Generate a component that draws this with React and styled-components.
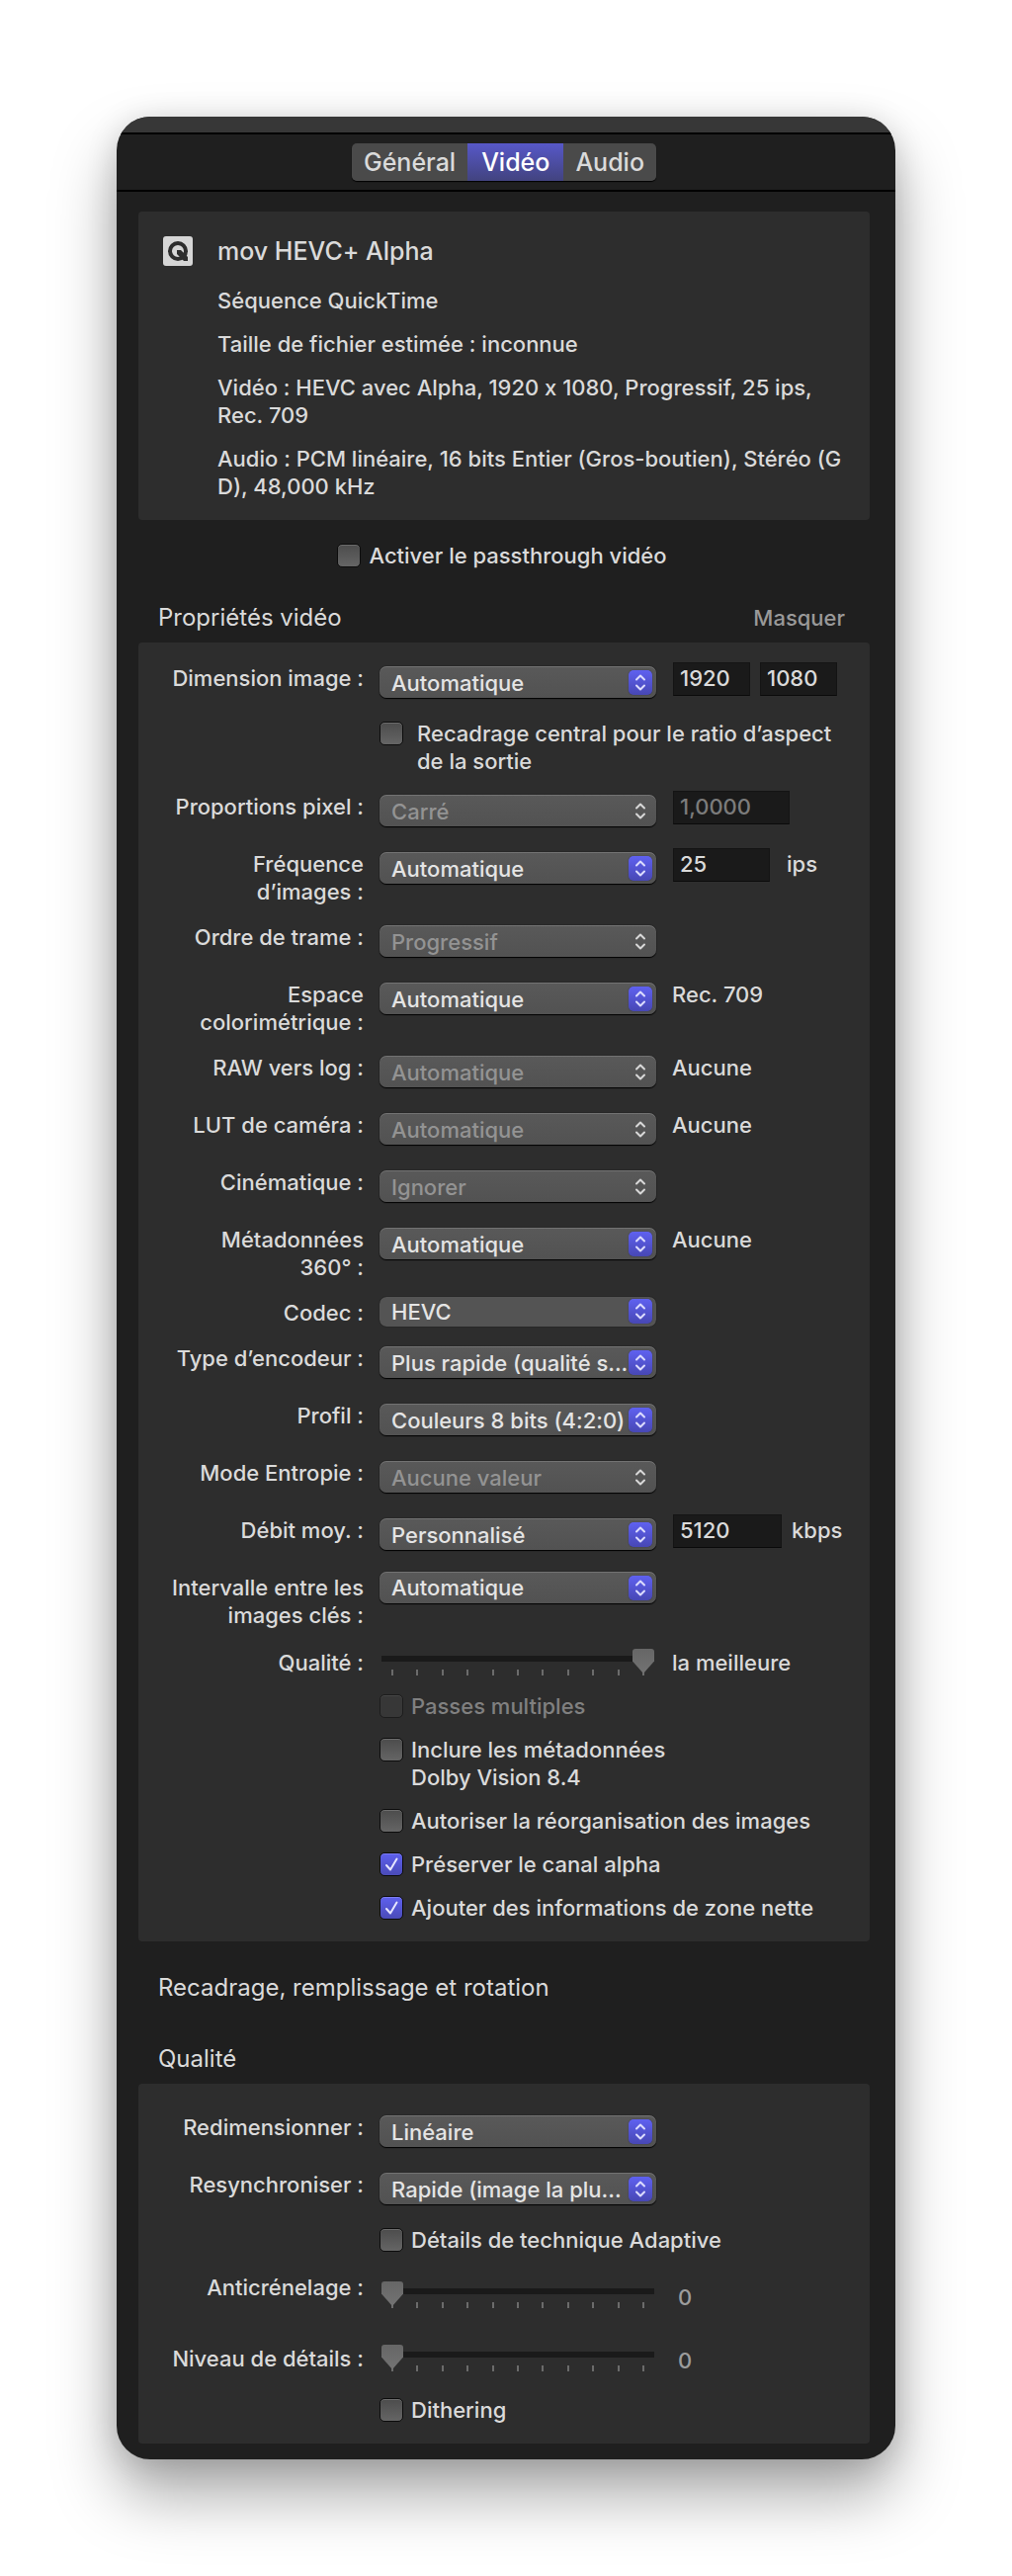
import React, { useId, useState } from 'react';
import styled, { createGlobalStyle, css } from 'styled-components';

const GlobalStyle = createGlobalStyle`
  * {
    box-sizing: border-box;
  }

  body {
    margin: 0;
    background: #fff;
    color: #dadada;
    font-family: Inter, "Liberation Sans", sans-serif;
    font-size: 22px;
    font-weight: 500;
    font-feature-settings: "calt" 0;
    line-height: 28px;
  }

  button, input, select {
    font: inherit;
    font-feature-settings: inherit;
    color: inherit;
  }
`;

const Page = styled.div`
  padding: 118px;
`;

const Window = styled.main`
  overflow: hidden;
  border-radius: 34px;
  background: #1f1f1f;
  box-shadow: 0 36px 64px rgba(0, 0, 0, 0.34), 0 4px 32px rgba(0, 0, 0, 0.14);
`;

const TitleBar = styled.div`
  height: 18px;
  background: #373737;
  border-bottom: 2px solid #000;
`;

const TabBar = styled.nav`
  display: flex;
  justify-content: center;
  padding: 9px 4px 9px 0;
  border-bottom: 2px solid #000;
`;

const Tabs = styled.div`
  display: flex;
  height: 38px;
  border-radius: 5px;
  box-shadow: 0 1px 1px #000;
`;

const Tab = styled.button`
  padding: 0 12px;
  border: none;
  background: #4a4a4a;
  font-size: 25px;
  line-height: 38px;

  &:first-child {
    border-radius: 5px 0 0 5px;
  }

  &:last-child {
    border-radius: 0 5px 5px 0;
  }

  ${(props) => props.$active && css`
    padding: 0 14px;
    background: linear-gradient(#5758c8, #42437f);
    color: #fff;
  `}
`;

const Content = styled.div`
  padding: 20px 26px 16px 22px;
`;

const Panel = styled.section`
  padding: ${(props) => props.$top || 22}px 20px 20px 28px;
  border-radius: 4px;
  background: #2d2d2d;
`;

const Summary = styled.section`
  display: grid;
  grid-template-columns: 30px 1fr;
  column-gap: 25px;
  padding: 24px 16px 20px 25px;
  border-radius: 4px;
  background: #2d2d2d;
`;

const PresetIcon = styled.svg`
  width: 30px;
  height: 30px;
  margin-top: 1px;
`;

const PresetName = styled.h1`
  margin: 0 0 20px;
  font-size: 25px;
  font-weight: 500;
  line-height: 32px;
`;

const SummaryLine = styled.p`
  margin: 0;

  & + & {
    margin-top: 16px;
  }
`;

const Passthrough = styled.div`
  display: flex;
  justify-content: center;
  padding: 22px 4px 33px 0;
`;

const SectionHeader = styled.header`
  display: flex;
  align-items: center;
  justify-content: space-between;
  height: 32px;
  margin-top: ${(props) => props.$top || 0}px;
  margin-bottom: 9px;
  padding: 0 25px 0 20px;
`;

const SectionTitle = styled.h2`
  margin: 0;
  font-size: 24px;
  font-weight: 400;
`;

const HideButton = styled.button`
  padding: 0;
  border: none;
  background: none;
  color: #999;
`;

const FormRow = styled.div`
  display: grid;
  grid-template-columns: 200px 280px minmax(0, 1fr);
  column-gap: 16px;
  align-items: start;
  min-height: ${(props) => props.$height || 40}px;
  margin-bottom: ${(props) => props.$gap || 18}px;
`;

const FieldLabel = styled.label`
  text-align: right;
`;

const CheckRow = styled.div`
  display: flex;
  width: ${(props) => (props.$narrow ? '290px' : 'auto')};
  margin-left: 216px;
  margin-bottom: ${(props) => props.$gap || 16}px;

  &:last-child {
    margin-bottom: 0;
  }
`;

const CheckLabel = styled.label`
  display: flex;
  align-items: flex-start;
  gap: ${(props) => (props.$wide ? 14 : 8)}px;
  color: ${(props) => (props.$disabled ? '#808080' : 'inherit')};
`;

const CheckBox = styled.span`
  position: relative;
  flex: none;
  width: 24px;
  height: 24px;
  margin-top: 2px;
`;

const CheckInput = styled.input`
  appearance: none;
  display: block;
  width: 24px;
  height: 24px;
  margin: 0;
  border: 1px solid #0c0c0c;
  border-radius: 5px;
  background: linear-gradient(#4c4c4c, #656565);
  box-shadow: inset 0 1px 0 rgba(255, 255, 255, 0.18);

  &:checked {
    background: linear-gradient(#5e60ee, #4a4bb8);
  }

  &:disabled {
    border-color: #1c1c1c;
    background: #373737;
    box-shadow: inset 0 1px 0 rgba(255, 255, 255, 0.08);
  }
`;

const CheckMark = styled.svg`
  position: absolute;
  inset: 0;
  pointer-events: none;
`;

const SelectBox = styled.div`
  position: relative;
  margin-top: ${(props) => (props.$raised ? -2 : 2)}px;
`;

const SelectInput = styled.select`
  appearance: none;
  display: block;
  width: 100%;
  height: ${(props) => (props.$flat ? 30 : 32)}px;
  padding: ${(props) => (props.$raised ? 0 : 2)}px 28px 0 12px;
  border: none;
  border-radius: 7px;
  background: linear-gradient(#595959, #525252);
  box-shadow: inset 0 1px 0 rgba(255, 255, 255, 0.16), 0 1px 1px #000, 0 0 1px #000;
  color: #e4e4e4;

  ${(props) => props.$flat && css`
    background: #545454;
    box-shadow: 0 0 1px #000;
  `}

  &:disabled {
    color: #939393;
    opacity: 1;
  }
`;

const Arrows = styled.svg`
  position: absolute;
  top: ${(props) => (props.$flat ? 2 : 4)}px;
  right: 4px;
  width: 24px;
  height: 25px;
  border-radius: 5px;
  pointer-events: none;
  color: #d8d8d8;

  ${(props) => props.$on && css`
    background: linear-gradient(#5f61f0, #4747b4);
    box-shadow: 0 0 1px #1b1b40;
    color: #dcdcff;
  `}
`;

const Extra = styled.div`
  display: flex;
  align-items: flex-start;
  gap: ${(props) => props.$gap || 10}px;
  padding-top: ${(props) => props.$drop || 0}px;
`;

const NumberInput = styled.input`
  width: ${(props) => props.$width}px;
  height: 34px;
  margin: -2px 0 0 1px;
  padding: 0 6px 2px;
  border: 1px solid #141414;
  border-bottom-color: #0a0a0a;
  border-radius: 0;
  background: #1a1a1a;

  &:disabled {
    color: #7c7c7c;
  }

  & + & {
    margin-left: 0;
  }
`;

const Output = styled.output`
  padding-left: ${(props) => (props.$muted ? 6 : 0)}px;
  color: ${(props) => (props.$muted ? '#9c9c9c' : 'inherit')};
`;

const SliderBox = styled.div`
  position: relative;
  height: 28px;
  margin-top: ${(props) => props.$drop || 0}px;
`;

const SliderInput = styled.input`
  appearance: none;
  position: relative;
  display: block;
  width: 100%;
  height: 26px;
  margin: 0;
  padding: 0 2px;
  background: none;

  &::-webkit-slider-runnable-track {
    height: 26px;
    background: linear-gradient(#1a1a1a, #1a1a1a) 0 7px / 100% 6px no-repeat;
  }

  &::-webkit-slider-thumb {
    appearance: none;
    width: 22px;
    height: 25px;
    border-radius: 3px 3px 0 0;
    background: linear-gradient(#666, #737373);
    clip-path: polygon(0 0, 100% 0, 100% 50%, 50% 100%, 0 50%);
  }
`;

const Ticks = styled.div`
  position: absolute;
  inset: 21px 12px auto;
  display: flex;
  justify-content: space-between;
`;

const Tick = styled.i`
  width: 2px;
  height: 6px;
  background: #6b6b6b;
`;

function Select({ id, value, disabled, flat, raised }) {
  return (
    <SelectBox $raised={raised || flat}>
      <SelectInput id={id} disabled={disabled} $flat={flat} $raised={raised || flat}>
        <option>{value}</option>
      </SelectInput>
      <Arrows viewBox="0 0 24 25" $on={!disabled} $flat={flat} aria-hidden="true">
        <path
          d="M8 9.5 12 5.5 16 9.5M8 15.5 12 19.5 16 15.5"
          fill="none"
          stroke="currentColor"
          strokeWidth="2"
          strokeLinecap="round"
          strokeLinejoin="round"
        />
      </Arrows>
    </SelectBox>
  );
}

function SelectRow({ label, value, disabled, flat, raised, height, gap, children }) {
  const id = useId();
  return (
    <FormRow $height={height} $gap={gap}>
      <FieldLabel htmlFor={id}>{label}</FieldLabel>
      <Select id={id} value={value} disabled={disabled} flat={flat} raised={raised} />
      {children}
    </FormRow>
  );
}

function Check({ label, defaultChecked = false, disabled, wide }) {
  const [checked, setChecked] = useState(defaultChecked);
  return (
    <CheckLabel $disabled={disabled} $wide={wide}>
      <CheckBox>
        <CheckInput
          type="checkbox"
          checked={checked}
          disabled={disabled}
          onChange={(e) => setChecked(e.target.checked)}
        />
        {checked && (
          <CheckMark viewBox="0 0 24 24" aria-hidden="true">
            <path
              d="M7 13 11 17.5 17.5 6.5"
              fill="none"
              stroke="#e6e6ff"
              strokeWidth="2"
              strokeLinecap="round"
              strokeLinejoin="round"
            />
          </CheckMark>
        )}
      </CheckBox>
      <span>{label}</span>
    </CheckLabel>
  );
}

function SliderRow({ label, defaultValue, output, muted, drop, outputDrop, height, gap }) {
  const id = useId();
  return (
    <FormRow $height={height} $gap={gap}>
      <FieldLabel htmlFor={id}>{label}</FieldLabel>
      <SliderBox $drop={drop}>
        <Ticks>
          {Array.from({ length: 11 }, (_, i) => (
            <Tick key={i} />
          ))}
        </Ticks>
        <SliderInput id={id} type="range" min="0" max="10" defaultValue={defaultValue} />
      </SliderBox>
      <Extra $drop={outputDrop}>
        <Output htmlFor={id} $muted={muted}>{output}</Output>
      </Extra>
    </FormRow>
  );
}

function App() {
  const [tab, setTab] = useState('Vidéo');

  return (
    <Page>
      <GlobalStyle />
      <Window>
        <TitleBar />
        <TabBar>
          <Tabs>
            {['Général', 'Vidéo', 'Audio'].map((name) => (
              <Tab key={name} type="button" $active={tab === name} onClick={() => setTab(name)}>
                {name}
              </Tab>
            ))}
          </Tabs>
        </TabBar>

        <Content>
          <Summary>
            <PresetIcon viewBox="0 0 30 30" aria-hidden="true">
              <rect width="30" height="30" rx="3" fill="#d6d6d6" />
              <circle cx="15" cy="15" r="8" fill="none" stroke="#2d2d2d" strokeWidth="4" />
              <path d="M14 14h4l7 7v4h-4l-7-7z" fill="#2d2d2d" />
            </PresetIcon>
            <div>
              <PresetName>mov HEVC+ Alpha</PresetName>
              <SummaryLine>Séquence QuickTime</SummaryLine>
              <SummaryLine>Taille de fichier estimée : inconnue</SummaryLine>
              <SummaryLine>Vidéo : HEVC avec Alpha, 1920 x 1080, Progressif, 25 ips, Rec. 709</SummaryLine>
              <SummaryLine>Audio : PCM linéaire, 16 bits Entier (Gros-boutien), Stéréo (G D), 48,000 kHz</SummaryLine>
            </div>
          </Summary>

          <Passthrough>
            <Check label="Activer le passthrough vidéo" />
          </Passthrough>

          <SectionHeader>
            <SectionTitle>Propriétés vidéo</SectionTitle>
            <HideButton type="button">Masquer</HideButton>
          </SectionHeader>
          <Panel>
            <SelectRow label="Dimension image :" value="Automatique" gap={16}>
              <Extra>
                <NumberInput $width={78} defaultValue="1920" aria-label="Largeur" />
                <NumberInput $width={78} defaultValue="1080" aria-label="Hauteur" />
              </Extra>
            </SelectRow>
            <CheckRow $gap={18}>
              <Check wide label="Recadrage central pour le ratio d’aspect de la sortie" />
            </CheckRow>
            <SelectRow label="Proportions pixel :" value="Carré" disabled>
              <Extra>
                <NumberInput $width={118} defaultValue="1,0000" disabled aria-label="Valeur des proportions" />
              </Extra>
            </SelectRow>
            <SelectRow label="Fréquence d’images :" value="Automatique">
              <Extra $gap={17}>
                <NumberInput $width={98} defaultValue="25" aria-label="Images par seconde" />
                <span>ips</span>
              </Extra>
            </SelectRow>
            <SelectRow label="Ordre de trame :" value="Progressif" disabled />
            <SelectRow label="Espace colorimétrique :" value="Automatique">
              <Output>Rec. 709</Output>
            </SelectRow>
            <SelectRow label="RAW vers log :" value="Automatique" disabled>
              <Output>Aucune</Output>
            </SelectRow>
            <SelectRow label="LUT de caméra :" value="Automatique" disabled>
              <Output>Aucune</Output>
            </SelectRow>
            <SelectRow label="Cinématique :" value="Ignorer" disabled />
            <SelectRow label={'Métadonnées 360°\u00a0:'} value="Automatique">
              <Output>Aucune</Output>
            </SelectRow>
            <SelectRow label="Codec :" value="HEVC" flat height={28} />
            <SelectRow label="Type d’encodeur :" value="Plus rapide (qualité s..." />
            <SelectRow label="Profil :" value="Couleurs 8 bits (4:2:0)" />
            <SelectRow label="Mode Entropie :" value="Aucune valeur" disabled />
            <SelectRow label="Débit moy. :" value="Personnalisé">
              <Extra>
                <NumberInput $width={110} defaultValue="5120" aria-label="Débit moyen" />
                <span>kbps</span>
              </Extra>
            </SelectRow>
            <SelectRow label="Intervalle entre les images clés :" value="Automatique" raised gap={20} />
            <SliderRow label="Qualité :" defaultValue={10} output="la meilleure" height={28} gap={16} />
            <CheckRow>
              <Check label="Passes multiples" disabled />
            </CheckRow>
            <CheckRow $narrow>
              <Check label="Inclure les métadonnées Dolby Vision 8.4" />
            </CheckRow>
            <CheckRow>
              <Check label="Autoriser la réorganisation des images" />
            </CheckRow>
            <CheckRow>
              <Check label="Préserver le canal alpha" defaultChecked />
            </CheckRow>
            <CheckRow>
              <Check label="Ajouter des informations de zone nette" defaultChecked />
            </CheckRow>
          </Panel>

          <SectionHeader $top={31}>
            <SectionTitle>Recadrage, remplissage et rotation</SectionTitle>
          </SectionHeader>
          <SectionHeader $top={40}>
            <SectionTitle>Qualité</SectionTitle>
          </SectionHeader>
          <Panel $top={30}>
            <SelectRow label="Redimensionner :" value="Linéaire" />
            <SelectRow label="Resynchroniser :" value="Rapide (image la plu..." gap={16} />
            <CheckRow $gap={20}>
              <Check label="Détails de technique Adaptive" />
            </CheckRow>
            <SliderRow
              label="Anticrénelage :"
              defaultValue={0}
              output="0"
              muted
              drop={8}
              outputDrop={10}
              height={52}
              gap={20}
            />
            <SliderRow
              label="Niveau de détails :"
              defaultValue={0}
              output="0"
              muted
              outputDrop={2}
              height={36}
              gap={16}
            />
            <CheckRow>
              <Check label="Dithering" />
            </CheckRow>
          </Panel>
        </Content>
      </Window>
    </Page>
  );
}

export default App;
